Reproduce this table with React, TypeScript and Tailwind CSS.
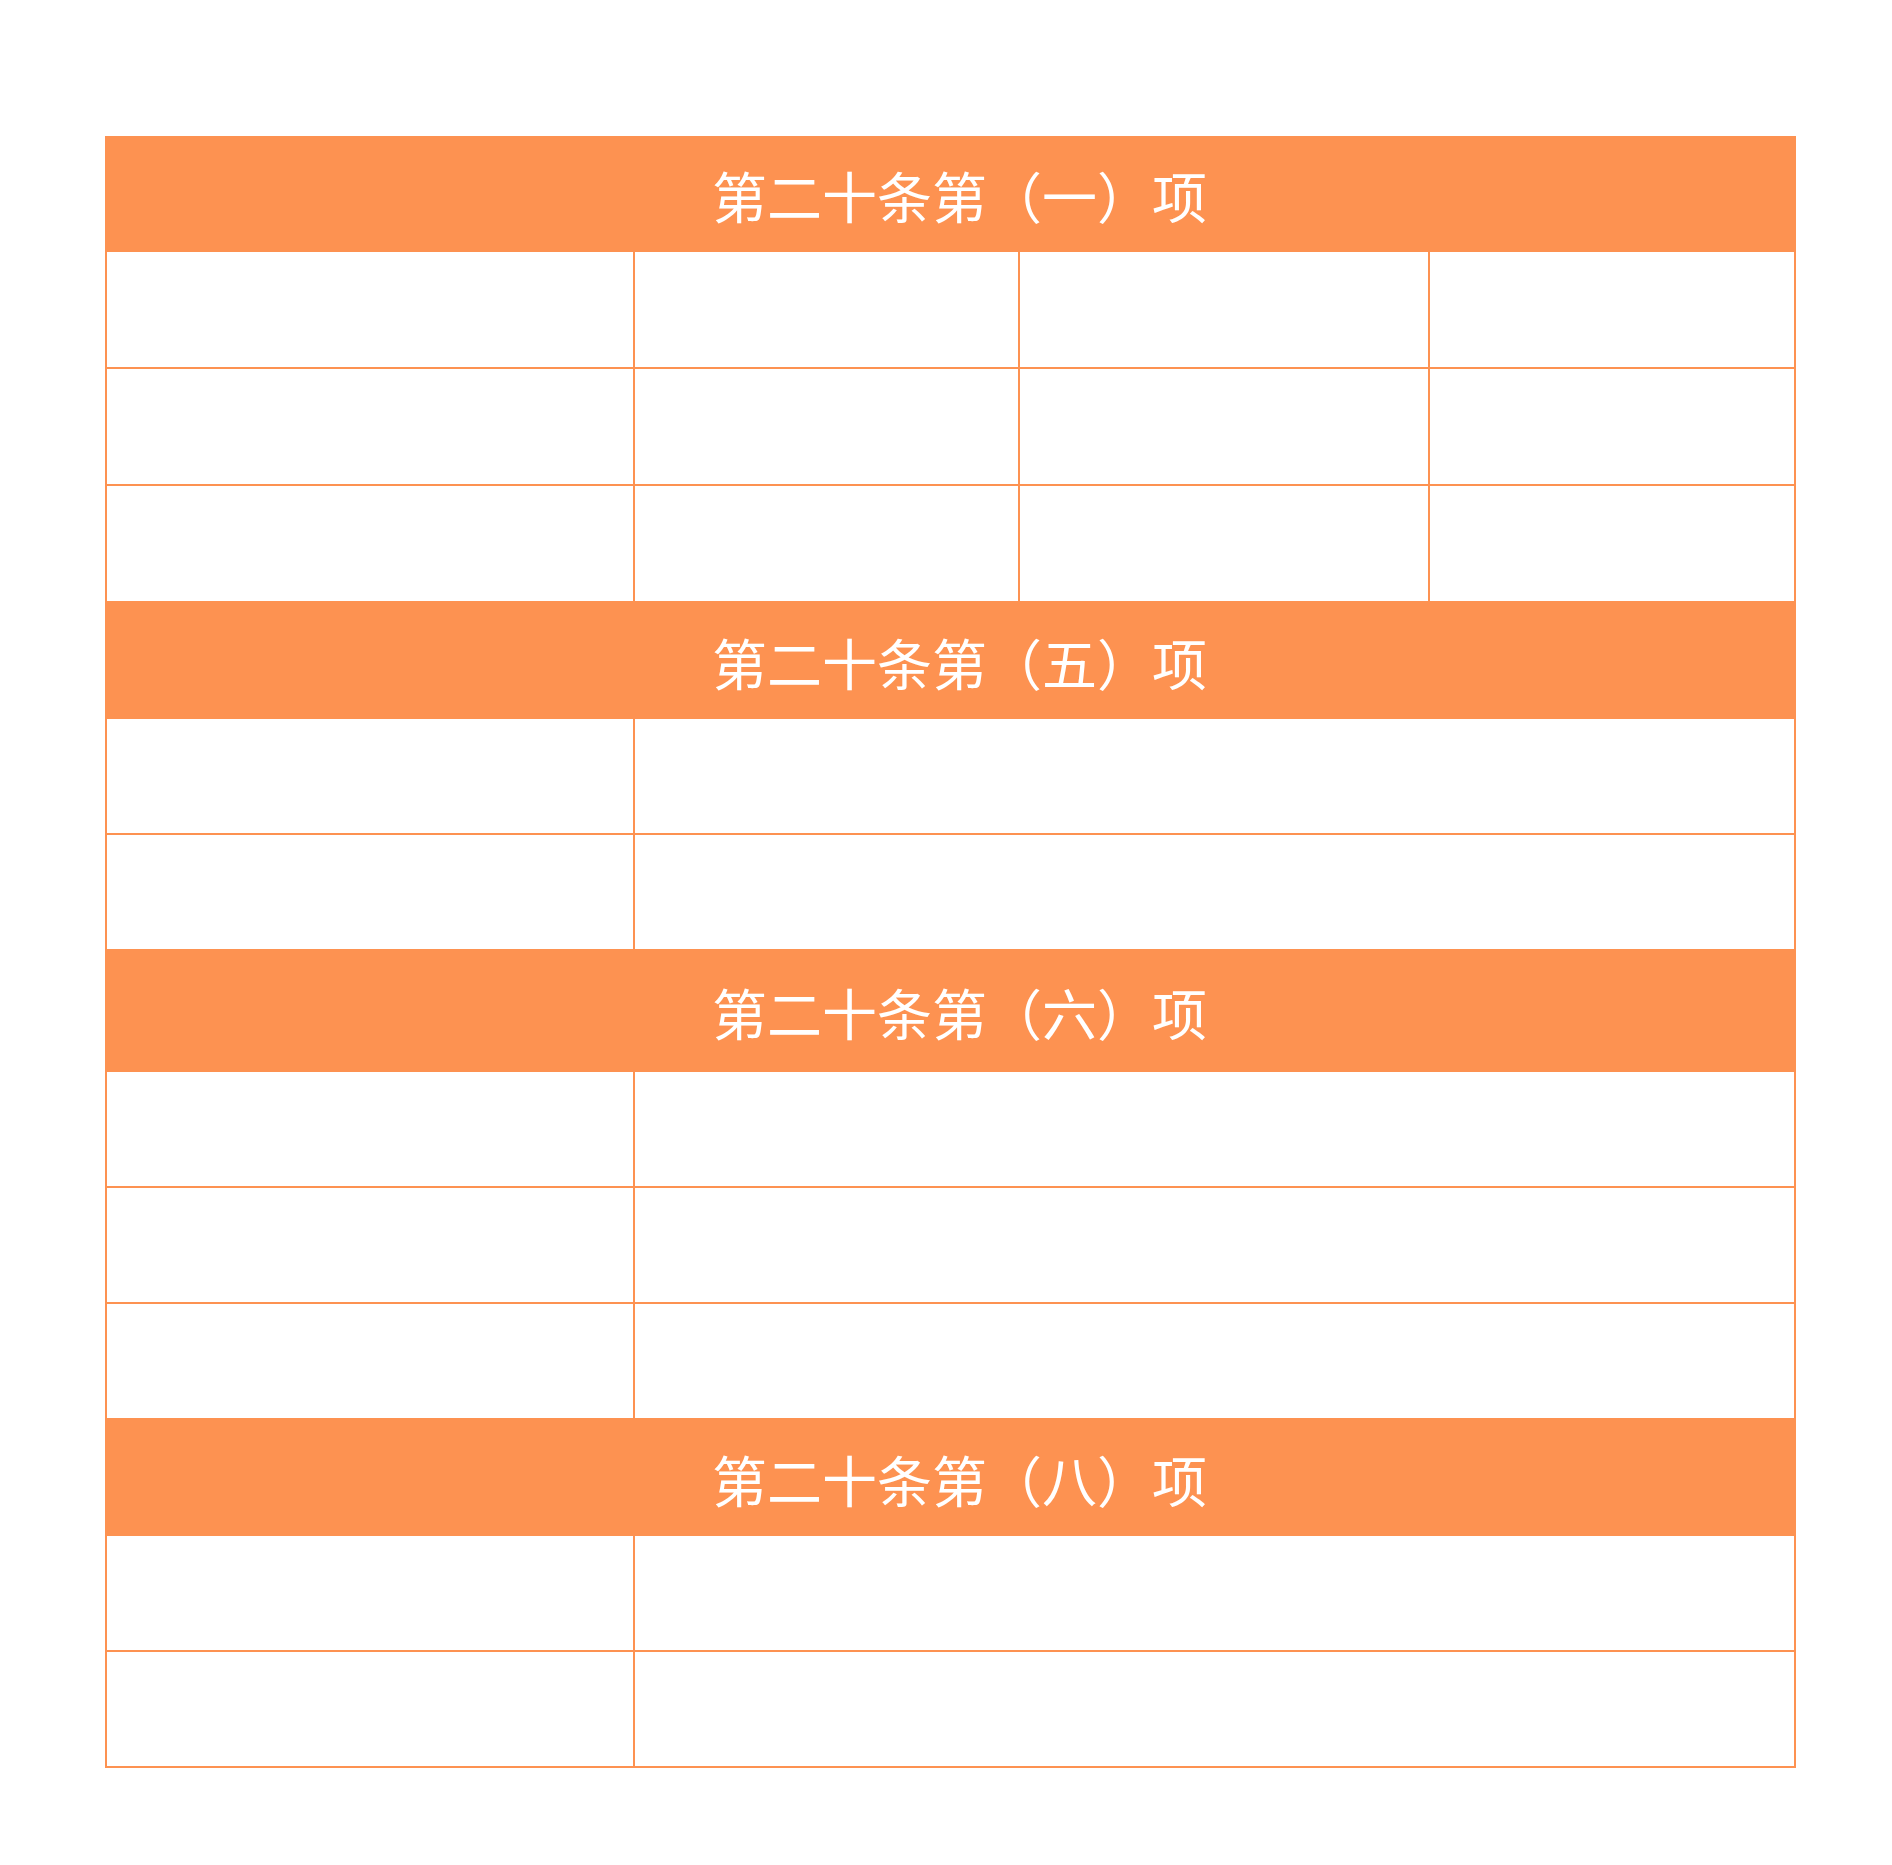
const ORANGE = 'bg-[#fd9251]'

type Section = { title: string; cols: 'four' | 'two'; rows: number; tall?: boolean }

const sections: Section[] = [
  { title: '第二十条第（一）项', cols: 'four', rows: 3 },
  { title: '第二十条第（五）项', cols: 'two', rows: 2 },
  { title: '第二十条第（六）项', cols: 'two', rows: 3, tall: true },
  { title: '第二十条第（八）项', cols: 'two', rows: 2 },
]

function Header({ title, tall }: { title: string; tall?: boolean }) {
  return (
    <div
      className={`${ORANGE} flex items-center justify-center text-[55px] leading-none text-white ${
        tall ? 'h-[121px]' : 'h-[116px]'
      }`}
    >
      <span className="pl-[18px]">{title}</span>
    </div>
  )
}

function Row({ cols }: { cols: 'four' | 'two' }) {
  if (cols === 'four') {
    return (
      <div className="grid h-[117px] grid-cols-[528px_385px_410px_368px] border-b-2 border-[#fd9251]">
        <div className="border-l-2 border-[#fd9251]" />
        <div className="border-l-2 border-[#fd9251]" />
        <div className="border-l-2 border-[#fd9251]" />
        <div className="border-x-2 border-[#fd9251]" />
      </div>
    )
  }
  return (
    <div className="grid h-[116px] grid-cols-[528px_1163px] border-b-2 border-[#fd9251]">
      <div className="border-l-2 border-[#fd9251]" />
      <div className="border-x-2 border-[#fd9251]" />
    </div>
  )
}

export default function App() {
  return (
    <div className="min-h-screen bg-white pt-[136px] pb-[98px] font-['Noto_Sans_CJK_SC',sans-serif]">
      <div className="ml-[105px] w-[1691px]">
        {sections.map((s) => (
          <section key={s.title}>
            <Header title={s.title} tall={s.tall} />
            {Array.from({ length: s.rows }, (_, i) => (
              <Row key={i} cols={s.cols} />
            ))}
          </section>
        ))}
      </div>
    </div>
  )
}
